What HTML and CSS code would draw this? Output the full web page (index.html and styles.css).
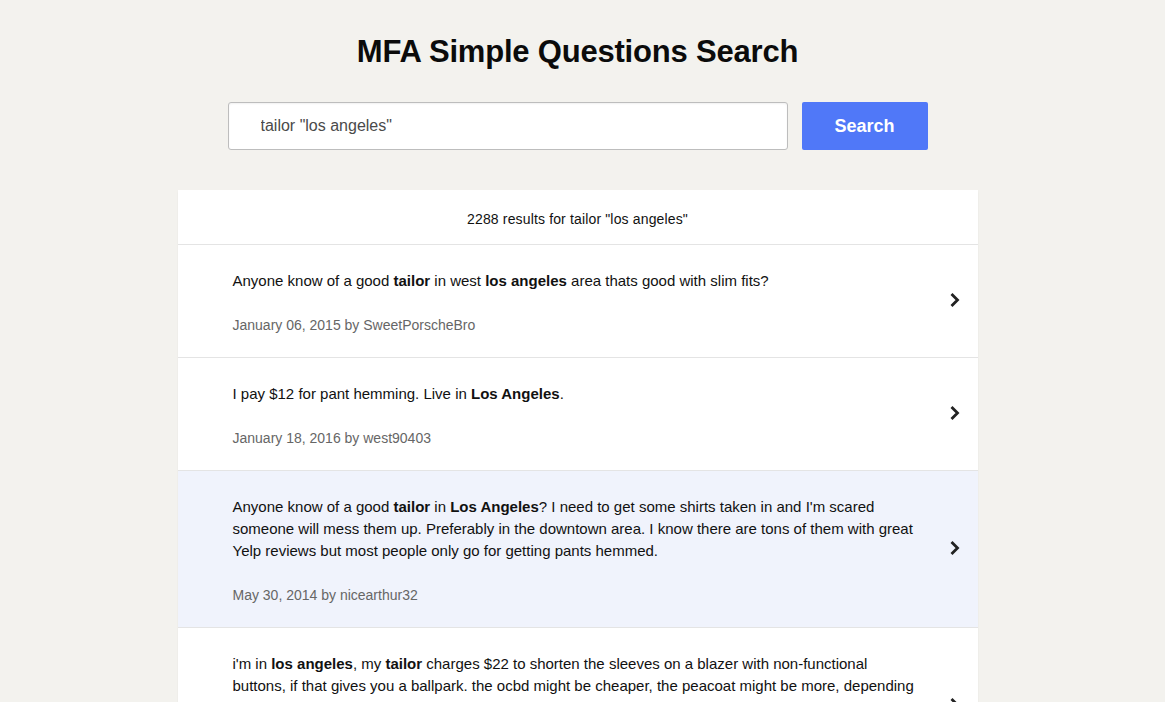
FILE: index.html
```html
<!DOCTYPE html>
<html>
<head>
<meta charset="utf-8">
<link rel="stylesheet" href="styles.css">
</head>
<body>
<main class="page">
  <h1 class="title">MFA Simple Questions Search</h1>
  <form class="search">
    <input class="search-input" type="text" value='tailor "los angeles"'>
    <button class="search-btn" type="button">Search</button>
  </form>
  <section class="results">
    <div class="results-head">2288 results for tailor "los angeles"</div>
    <a class="result">
      <div class="result-body">
        <p class="result-text">Anyone know of a good <b>tailor</b> in west <b>los angeles</b> area thats good with slim fits?</p>
        <p class="result-meta">January 06, 2015 by SweetPorscheBro</p>
      </div>
      <svg class="chev" width="13" height="16" viewBox="0 0 13 16"><path d="M3.5 2 L9.5 8 L3.5 14" fill="none" stroke="#222" stroke-width="2.8"/></svg>
    </a>
    <a class="result">
      <div class="result-body">
        <p class="result-text">I pay $12 for pant hemming. Live in <b>Los Angeles</b>.</p>
        <p class="result-meta">January 18, 2016 by west90403</p>
      </div>
      <svg class="chev" width="13" height="16" viewBox="0 0 13 16"><path d="M3.5 2 L9.5 8 L3.5 14" fill="none" stroke="#222" stroke-width="2.8"/></svg>
    </a>
    <a class="result result-hover">
      <div class="result-body">
        <p class="result-text">Anyone know of a good <b>tailor</b> in <b>Los Angeles</b>? I need to get some shirts taken in and I'm scared someone will mess them up. Preferably in the downtown area. I know there are tons of them with great Yelp reviews but most people only go for getting pants hemmed.</p>
        <p class="result-meta">May 30, 2014 by nicearthur32</p>
      </div>
      <svg class="chev" width="13" height="16" viewBox="0 0 13 16"><path d="M3.5 2 L9.5 8 L3.5 14" fill="none" stroke="#222" stroke-width="2.8"/></svg>
    </a>
    <a class="result">
      <div class="result-body">
        <p class="result-text">i'm in <b>los angeles</b>, my <b>tailor</b> charges $22 to shorten the sleeves on a blazer with non-functional buttons, if that gives you a ballpark. the ocbd might be cheaper, the peacoat might be more, depending on if it has functional buttons (but I doubt it would).</p>
        <p class="result-meta">March 02, 2014 by someone</p>
      </div>
      <svg class="chev" width="13" height="16" viewBox="0 0 13 16"><path d="M3.5 2 L9.5 8 L3.5 14" fill="none" stroke="#222" stroke-width="2.8"/></svg>
    </a>
  </section>
</main>
</body>
</html>
```

FILE: styles.css
```css
html, body {
  margin: 0;
  padding: 0;
}
body {
  background: #f3f2ee;
  font-family: "Liberation Sans", Arial, sans-serif;
  color: #111;
}
.page {
  display: flex;
  flex-direction: column;
  align-items: center;
  padding-top: 31px;
  padding-right: 10px;
}
.title {
  margin: 0;
  font-size: 31px;
  font-weight: 700;
  line-height: 42px;
  letter-spacing: -0.2px;
  color: #0b0b0b;
}
.search {
  display: flex;
  gap: 14px;
  margin-top: 29px;
}
.search-input {
  box-sizing: border-box;
  width: 560px;
  height: 48px;
  border: 1px solid #bdbdbd;
  border-radius: 3px;
  background: #fff;
  padding: 0 32px;
  font-family: "Liberation Sans", Arial, sans-serif;
  font-size: 16px;
  color: #4a4a4a;
  box-shadow: inset 0 1px 2px rgba(0,0,0,0.06);
  outline: none;
}
.search-btn {
  width: 126px;
  height: 48px;
  border: none;
  border-radius: 2px;
  background: #5078f8;
  color: #fff;
  font-family: "Liberation Sans", Arial, sans-serif;
  font-size: 18px;
  font-weight: 700;
  cursor: pointer;
}
.results {
  margin-top: 40px;
  width: 800px;
  background: #fff;
  box-shadow: 0 1px 2px rgba(0,0,0,0.05);
}
.results-head {
  height: 55px;
  padding-top: 3px;
  box-sizing: border-box;
  display: flex;
  align-items: center;
  justify-content: center;
  font-size: 14px;
  letter-spacing: 0.15px;
  color: #111;
  border-bottom: 1px solid #e4e4e4;
}
.result {
  display: flex;
  align-items: center;
  padding: 25px 17px 21px 55px;
  border-bottom: 1px solid #e4e4e4;
  cursor: pointer;
}
.result-hover {
  background: #f0f3fc;
}
.result-body {
  flex: 1;
  padding-right: 30px;
}
.result-text {
  margin: 0;
  font-size: 15px;
  line-height: 22px;
  color: #111;
}
.result-text b {
  font-weight: 700;
}
.result-meta {
  margin: 22px 0 0;
  font-size: 14px;
  line-height: 22px;
  color: #666;
}
.chev {
  flex: none;
  margin-bottom: 6px;
}
```
